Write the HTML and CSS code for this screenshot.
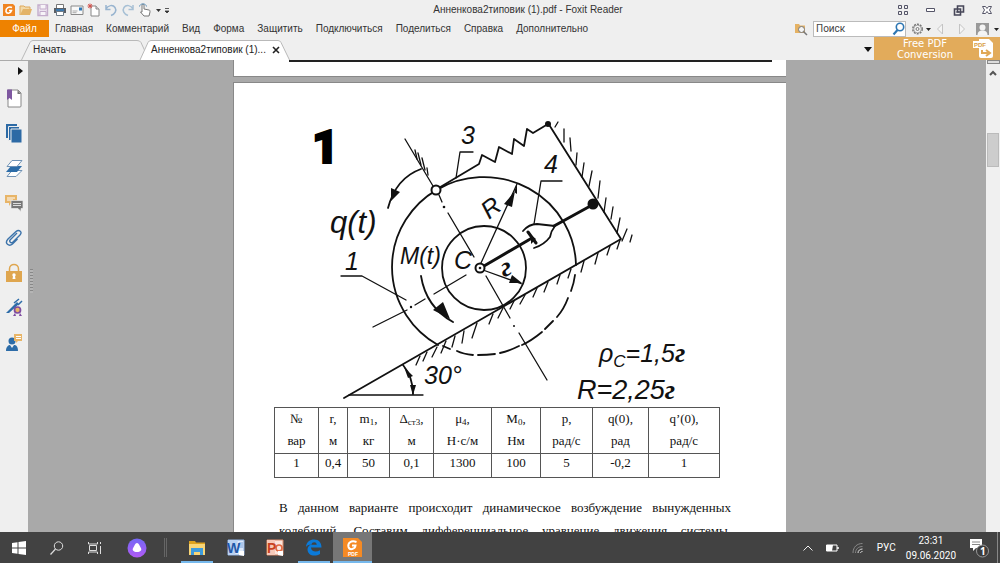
FILE: index.html
```html
<!DOCTYPE html>
<html lang="ru">
<head>
<meta charset="utf-8">
<title>Анненкова2типовик (1).pdf - Foxit Reader</title>
<link rel="stylesheet" href="styles.css">
</head>
<body>
<header class="chrome">
  <div class="titlebar">
    <div class="quick">
      <button aria-label="Foxit"><svg width="14" height="14" viewBox="0 0 14 14"><path d="M1 1h10l2 2v10H1z" fill="#f08421"/><path d="M10 4.500C7 3 3.500 5 4 8.500c.5 2.500 4.500 2.500 5.500-1H7" fill="none" stroke="#fff" stroke-width="1.600"/></svg></button>
      <button aria-label="Открыть"><svg width="14" height="14" viewBox="0 0 14 14"><path d="M1 12V3h4l1 1h5v2" fill="#f2d9a8" stroke="#dfa95a"/><path d="M1 12l3-6h9l-2 6z" fill="#e3b368"/></svg></button>
      <button aria-label="Сохранить"><svg width="14" height="14" viewBox="0 0 14 14"><path d="M2 2h9.500v10.500H2z" fill="#ece4ef" stroke="#c4adcc" stroke-width="1.400"/><path d="M4 2v4h6V2M4 12V8.500h6V12" fill="#f7f4f8" stroke="#c4adcc"/></svg></button>
      <button aria-label="Печать"><svg width="14" height="14" viewBox="0 0 14 14"><path d="M3.500 5V1.500h7V5" fill="#fff" stroke="#777"/><path d="M1 5h12v5H1z" fill="#5a5f66"/><path d="M3 6h8v2H3z" fill="#3d78ad"/><path d="M3.500 8.500h7v4h-7z" fill="#fff" stroke="#6e7b88"/></svg></button>
      <button aria-label="Почта"><svg width="14" height="14" viewBox="0 0 14 14"><path d="M1 3h12v8.500H1z" fill="#f8f8f8" stroke="#888"/><path d="M9 4.500h3v3H9z" fill="#2f77b5"/><path d="M2.500 8h5M2.500 9.700h4" stroke="#aaa"/></svg></button>
      <button aria-label="Создать"><svg width="14" height="14" viewBox="0 0 14 14"><path d="M4 3h5l3 3v7H4z" fill="#fff" stroke="#888"/><path d="M9 3v3h3" fill="#ddd" stroke="#888"/><path d="M3 .5v5M.5 3h5M1.200 1.200l3.600 3.600M4.800 1.200L1.200 4.800" stroke="#d4534d"/></svg></button>
      <button aria-label="Отменить"><svg width="14" height="14" viewBox="0 0 14 14"><path d="M2 2v4.500h4.500M2 6C4 2 9 1.500 11 4.500S11 11 7 12.500" fill="none" stroke="#98b4cf" stroke-width="1.500"/></svg></button>
      <button aria-label="Повторить"><svg width="14" height="14" viewBox="0 0 14 14"><path d="M12 2v4.500H7.500M12 6C10 2 5 1.500 3 4.500S3 11 7 12.500" fill="none" stroke="#a7c0d5" stroke-width="1.500"/></svg></button>
      <button aria-label="Рука"><svg width="14" height="14" viewBox="0 0 14 14"><path d="M4 9V2c0-1 2-1 2 0v4l5 1c1 0 1 1 1 2l-1 4H6L2.500 9z" fill="#fff" stroke="#777"/><path d="M1.500 3.500C2 0 8 0 8.500 3.500" fill="none" stroke="#5e8fb7"/></svg></button>
      <svg class="drop" width="6" height="14" viewBox="0 0 6 14"><path d="M1 6h5L3.500 9z" fill="#333"/></svg>
      <svg class="drop" width="6" height="14" viewBox="0 0 6 14"><path d="M1 5.500h4M1 8h4L3 10z" fill="#333" stroke="#333" stroke-width=".8"/></svg>
    </div>
    <div class="title">Анненкова2типовик (1).pdf - Foxit Reader</div>
    <div class="window-buttons">
      <button aria-label="Панель"><svg width="12" height="12" viewBox="0 0 12 12" fill="none" stroke="#555568"><path d="M1.500 1.500h3v3h-3zM7.500 1.500h3v3h-3zM1.500 7.500h3v3h-3zM7.500 7.500h3v3h-3z"/></svg></button>
      <button aria-label="Свернуть"><svg width="12" height="12" viewBox="0 0 12 12"><path d="M1.500 4.500h8v3h-8z" fill="#fff" stroke="#555568"/></svg></button>
      <button aria-label="Восстановить"><svg width="12" height="12" viewBox="0 0 12 12"><path d="M4.500 2h6v6h-6zM1.500 5h6v6h-6z" fill="#eee" stroke="#474759" stroke-width="1.600"/><path d="M3 8h3" stroke="#474759"/></svg></button>
      <button aria-label="Закрыть"><svg width="12" height="12" viewBox="0 0 12 12"><path d="M1.500 2.500h3L6 4.500l1.500-2h3L8.500 6l2 3.500h-3L6 7.500l-1.500 2h-3l2-3.500z" fill="#fff" stroke="#555568"/></svg></button>
    </div>
  </div>
  <div class="menubar">
    <nav class="menu">
      <button class="file">Файл</button>
      <button>Главная</button>
      <button>Комментарий</button>
      <button>Вид</button>
      <button>Форма</button>
      <button>Защитить</button>
      <button>Подключиться</button>
      <button>Поделиться</button>
      <button>Справка</button>
      <button>Дополнительно</button>
    </nav>
    <div class="tools">
      <button aria-label="Поиск в папке"><svg width="14" height="14" viewBox="0 0 14 14"><path d="M1 2h4l1 1.500h5V11H1z" fill="#e5b264"/><circle cx="7.500" cy="7.500" r="3" fill="#f4f4f4" stroke="#777"/><path d="M9.500 9.500L13 13" stroke="#777" stroke-width="1.500"/></svg></button>
      <div class="search"><input type="text" placeholder="Поиск" aria-label="Поиск"><svg width="13" height="14" viewBox="0 0 13 14"><circle cx="8" cy="5" r="3.700" fill="#fff" stroke="#2e77b3" stroke-width="1.600"/><path d="M5.500 8L1.500 12.500" stroke="#2e77b3" stroke-width="2.200"/></svg></div>
      <button aria-label="Настройки"><svg width="20" height="14" viewBox="0 0 20 14"><circle cx="6.500" cy="7" r="4.700" fill="none" stroke="#777" stroke-width="1.500" stroke-dasharray="2 1"/><circle cx="6.500" cy="7" r="3.800" fill="#f5f5f5" stroke="#888" stroke-width=".7"/><circle cx="6.500" cy="7" r="1.500" fill="none" stroke="#777"/><path d="M15 6h5l-2.500 3z" fill="#222"/></svg></button>
      <button aria-label="Назад"><svg width="8" height="14" viewBox="0 0 8 14"><path d="M6.500 2v10L1.500 7z" fill="#f5f5f5" stroke="#c4c4c4"/></svg></button>
      <button class="forward" aria-label="Вперёд"><svg width="8" height="14" viewBox="0 0 8 14"><path d="M1.500 2v10l5-5z" fill="#f5f5f5" stroke="#c4c4c4"/></svg></button>
      <button class="profile" aria-label="Профиль"><svg width="24" height="14" viewBox="0 0 24 14"><path d="M0 1h13v12H0z" fill="#999"/><circle cx="6.500" cy="5.500" r="3" fill="#f4f4f4"/><path d="M1.500 13c0-3 2-4 3.500-4.500h3c1.500.5 3.500 1.500 3.500 4.500z" fill="#f4f4f4"/><path d="M18 6h5l-2.500 3z" fill="#222"/></svg></button>
    </div>
  </div>
  <div class="tabbar">
    <div class="tabs">
      <svg class="tab-shapes" width="290" height="20" viewBox="0 0 290 20"><path d="M21.500 20L30 2.500Q31 .5 33 .5H137q3 0 4 2L149 20" fill="#f1f1f1" stroke="#b9b9b9"/><path d="M140 20L148 2.500Q149 .5 151 .5H278q2 0 3 2L289.500 20" fill="#fff" stroke="#b9b9b9"/></svg>
      <button class="tab first">Начать</button>
      <button class="tab second">Анненкова2типовик (1)...</button>
      <button class="tab close" aria-label="Закрыть вкладку"><svg width="8" height="8" viewBox="0 0 8 8"><path d="M1 1l6 6M7 1L1 7" stroke="#222" stroke-width="1.600"/></svg></button>
    </div>
    <svg class="tab-drop" width="8" height="5" viewBox="0 0 8 5"><path d="M0 0h8L4 5z" fill="#111"/></svg>
    <a class="banner" href="#"><span>Free PDF<br>Conversion</span>
      <svg width="22" height="21" viewBox="0 0 22 21"><path d="M6 1h10l4 4v13q0 2-2 2H8q-2 0-2-2z" fill="#fff"/><path d="M0 3h14v7H0z" fill="#fff"/><path d="M9 12v3h7M13 12l4 3-4 3" fill="none" stroke="#e0a856" stroke-width="2"/><text x="1" y="9" class="pdf-mark">PDF</text></svg></a>
  </div>
</header>

<main class="workspace">
  <aside class="sidebar">
    <button class="expand" aria-label="Развернуть"><svg width="5" height="8" viewBox="0 0 5 8"><path d="M0 0l5 4-5 4z" fill="#111"/></svg></button>
    <button aria-label="Закладки"><svg width="18" height="20" viewBox="0 0 18 20"><path d="M3 2h10l3 3v13q0 1-1 1H3z" fill="#fff" stroke="#888"/><path d="M12.500 2v4H16z" fill="#777"/><path d="M2 1.500h5V12l-2.500-2L2 12z" fill="#7e57a0"/></svg></button>
    <button aria-label="Страницы"><svg width="18" height="20" viewBox="0 0 18 20"><path d="M1 1h11v14H1z" fill="#2d6aa5"/><path d="M3.500 3.500h11v14h-11z" fill="#2d6aa5" stroke="#eee"/><path d="M6 6h11v14H6z" fill="#2d6aa5" stroke="#eee"/></svg></button>
    <button aria-label="Слои"><svg width="18" height="20" viewBox="0 0 18 20"><path d="M2 18.500l5-6h10l-6 6z" fill="#fff" stroke="#6f92b5"/><path d="M1 14l5-6h11l-5 6z" fill="#2c6ca8"/><path d="M2 8.500l5-6h10l-5 6z" fill="#fff" stroke="#6f92b5"/></svg></button>
    <button aria-label="Комментарии"><svg width="20" height="20" viewBox="0 0 20 20"><path d="M1 2h12v8H7l-2 3v-3H1z" fill="#e8b568"/><path d="M3 5h8M3 7h6" stroke="#fff"/><path d="M7 7.500h12v8h-2v3l-3-3H7z" fill="#777" stroke="#eee" stroke-width=".7"/><path d="M9 10.500h8M9 12.500h8" stroke="#ddd"/></svg></button>
    <button aria-label="Вложения"><svg width="18" height="20" viewBox="0 0 18 20"><path d="M12 5L5.500 11.500c-2 2 .5 4.500 2.500 2.500l7-7c3-3-1-6-4-3.500L3 11c-4 4.500 1 8 4.500 5l5-5" fill="none" stroke="#3c73aa" stroke-width="1.400"/></svg></button>
    <button aria-label="Безопасность"><svg width="18" height="20" viewBox="0 0 18 20"><path d="M4.500 9V6c0-6 9-6 9 0v3" fill="none" stroke="#dfa64f" stroke-width="1.500"/><path d="M1 8h16v11H1z" fill="#dfa64f"/><circle cx="9" cy="12" r="1.700" fill="#fff"/><path d="M8.200 12h1.600l.7 4h-3z" fill="#fff"/></svg></button>
    <button aria-label="Подписи"><svg width="18" height="20" viewBox="0 0 18 20"><path d="M1 15L12 4l2 2L4 15z" fill="#2d6ca8"/><path d="M9 5l5-4M13 7l4-4" stroke="#2d6ca8" stroke-width="1.500"/><circle cx="12.500" cy="12" r="3" fill="#e8b568" stroke="#7e4ba0" stroke-width="1.700"/><path d="M10 15l-2 3h3zM15 15l2 3h-3z" fill="#7e4ba0"/></svg></button>
    <button aria-label="Общий просмотр"><svg width="18" height="20" viewBox="0 0 18 20"><circle cx="7" cy="8" r="3.500" fill="#2d6ca8"/><path d="M1 18c0-5 3-6 4-6l2 3 2-3c2 0 4 1 4 6z" fill="#2d6ca8"/><path d="M9 1h8v7h-4l-2 2V8H9z" fill="#e8b568"/><path d="M11 3.500h5M11 5.500h5" stroke="#fff"/></svg></button>
  </aside>
  <div class="viewer">
    <div class="grip"></div>
    <div class="pages">
      <section class="page previous"><hr></section>
      <section class="page">
        <svg class="figure" viewBox="234 82 552 323" role="img" aria-label="Схема механической системы">
          <g class="line">
            <path d="M438 344A92 90 0 1 1 576 264"/>
            <path d="M575 274Q574 282 571 290M568 297Q564 308 557 316M553 320Q549 324 545 328M542 331Q531 340 522 344M519 345Q509 350 500 352M495 353Q487 354 478 354M473 354Q463 353 457 350M450 348L443 345"/>
            <circle cx="484" cy="267" r="42"/>
            <path d="M344 397L621 238L548 122"/>
            <path d="M437 188L479 163L482 154L495 161L499 146L512 153L514 138L524 145L527 128L533 132L548 123"/>
            <path d="M421 168Q396 177 388 207M421 275Q426 306 453 321M403 364Q413 376 413 393"/>
            <path d="M523 230Q529 223 537 223L555 225Q551 230 550 236Q544 244 534 247"/>
          </g>
          <g class="thin">
            <path d="M405 138L433 185M439 194L442 201M448 212L474 256M486 275L510 317M519 332L547 379M373 326L407 309M415 304L425 298M434 293L466 274"/>
            <path d="M349 394H423M341 275H362L406 299M456 177L460 151H473M534 223L541 180H562"/>
            <path d="M481 262L517 183M483 269L522 283"/>
            <path d="M415 149l2 9M418 152l3 12M422 157l3 12M427 167l1 7"/>
            <path d="M558 121l-3 5M564 128v13M570 137l1 13M577 152l-1 12M584 162l-2 14M592 170l-3 15M600 180l-2 17M606 197l-2 14M613 206l-2 12M620 217l-3 15M627 228l-5 12M632 234l-2 7"/>
            <path d="M420 355l-4 9M427 351l-4 9M437 346l-5 10M446 340l-5 12M455 335l-3 11M464 330l-2 12M477 322l-5 15M493 313l-4 10M503 307l-5 10M514 300l-4 8M525 294l-5 9M537 287l-4 9M548 281l-4 10M560 274l-3 9M571 268l-3 9M584 260l-3 11M598 252l-3 11M610 245l-3 9M620 239l-3 9"/>
          </g>
          <g class="thick"><path d="M484 265L532 237M528 231L536 242M554 225L594 203"/></g>
          <g class="ink">
            <circle cx="593" cy="203" r="5.500"/><circle cx="548" cy="123" r="3"/><circle cx="444" cy="206" r="1.300"/><circle cx="514" cy="325" r="1"/><circle cx="411" cy="306" r="1.200"/>
            <path d="M391 187l9 4-9 9zM433 309l10-8 7 17zM404 366l9 9-5 2zM410 384h6l-3 10zM504 203l8 3 3-16zM509 282l3-8 10 8zM514 191l3-8v10zM531 234l5 4-5 5z"/>
          </g>
          <g class="joint"><circle cx="436" cy="189" r="4.500"/><circle cx="480" cy="267" r="4.500"/></g>
          <circle class="ink" cx="480" cy="267" r="1.300"/>
          <text class="variant" x="312" y="162">1</text>
          <g class="hand">
            <text class="large" x="330" y="232">q(t)</text>
            <text class="moment" x="400" y="263">M(t)</text>
            <text x="454" y="268">C</text>
            <text transform="translate(489 219) rotate(-38)" x="0" y="0">R</text>
            <text class="radius" transform="translate(503 276) rotate(-15)" x="0" y="0">г</text>
            <text x="461" y="143">3</text>
            <text x="544" y="172">4</text>
            <text x="345" y="269">1</text>
            <text x="424" y="383">30°</text>
            <text x="599" y="361">ρ<tspan class="sub" dy="5">C</tspan><tspan dy="-5">=1,5</tspan><tspan class="radius">г</tspan></text>
            <text class="formula" x="577" y="398">R=2,25<tspan class="radius">г</tspan></text>
          </g>
        </svg>
        <table>
          <colgroup><col class="c1"><col class="c2"><col class="c3"><col class="c4"><col class="c5"><col class="c6"><col class="c7"><col class="c8"><col class="c9"></colgroup>
          <thead><tr><th>№<br>вар</th><th>r,<br>м</th><th>m<sub>1</sub>,<br>кг</th><th>Δ<sub>ст3</sub>,<br>м</th><th>μ<sub>4</sub>,<br>Н·с/м</th><th>M<sub>0</sub>,<br>Нм</th><th>p,<br>рад/с</th><th>q(0),<br>рад</th><th>q’(0),<br>рад/с</th></tr></thead>
          <tbody><tr><td>1</td><td>0,4</td><td>50</td><td>0,1</td><td>1300</td><td>100</td><td>5</td><td>-0,2</td><td>1</td></tr></tbody>
        </table>
        <p>В данном варианте происходит динамическое возбуждение вынужденных колебаний. Составим дифференциальное уравнение движения системы,</p>
      </section>
    </div>
    <div class="scrollbar">
      <span class="split"></span>
      <button aria-label="Вверх"><svg width="8" height="6" viewBox="0 0 8 6"><path d="M1 5l3-3 3 3" fill="none" stroke="#555" stroke-width="2"/></svg></button>
      <span class="thumb"></span>
    </div>
  </div>
</main>

<footer class="taskbar">
  <div class="apps">
    <button aria-label="Пуск"><svg width="14" height="14" viewBox="0 0 14 14"><path d="M0 2l5.500-.8v5.300H0zM6.500 1L14 0v6.500H6.500zM0 7.500h5.500v5.300L0 12zM6.500 7.500H14V14l-7.500-1z" fill="#fff"/></svg></button>
    <button aria-label="Поиск"><svg width="14" height="14" viewBox="0 0 14 14"><circle cx="8.500" cy="5" r="4.200" fill="none" stroke="#ddd"/><path d="M5.500 8L.5 13.500" stroke="#ddd" stroke-width="1.200"/></svg></button>
    <button aria-label="Представление задач"><svg width="14" height="14" viewBox="0 0 14 14" fill="none" stroke="#ddd"><path d="M.5 1v2h9V1M.5 13v-2h9v2M1.500 4.500h7v5h-7zM12.500 1v2M12.500 5v8"/></svg></button>
    <button class="alice" aria-label="Алиса"><svg width="20" height="20" viewBox="0 0 20 20"><defs><linearGradient id="violet" x1="0" y1="0" x2="0" y2="1"><stop offset="0" stop-color="#7468f5"/><stop offset="1" stop-color="#b15af5"/></linearGradient></defs><circle cx="10" cy="10" r="9.500" fill="url(#violet)"/><path d="M10 5c1 0 1.500.8 2 1.600l2 3.700c1 2-.5 3.700-4 3.700s-5-1.700-4-3.700l2-3.700C8.500 5.800 9 5 10 5z" fill="#fff"/></svg></button>
    <span class="divider"></span>
    <button class="running" aria-label="Проводник"><svg width="18" height="16" viewBox="0 0 18 16"><path d="M1 1h6l1 1.500h9V5H1z" fill="#dda21e"/><path d="M1 4h16v11H1z" fill="#f8d576"/><path d="M3 15V8h12v7h-3v-3H6v3z" fill="#3d9bdc"/></svg></button>
    <button aria-label="Word"><svg width="18" height="18" viewBox="0 0 18 18"><path d="M1 1h16v15H1z" fill="#dde9fa" stroke="#8daede"/><path d="M12 4h4M12 6h4M12 8h4" stroke="#78a0db"/><path d="M1 1h10L8 16H1z" fill="#b9d1f2"/><text x="0" y="14" class="office word">W</text><path d="M12 12h5v5l-5-1z" fill="#fff"/></svg></button>
    <button aria-label="PowerPoint"><svg width="18" height="18" viewBox="0 0 18 18"><path d="M1 1h16v15H1z" fill="#fbe5dc" stroke="#db8969"/><circle cx="13" cy="9" r="3" fill="none" stroke="#e2683f" stroke-width="1.600"/><path d="M1 1h8v15H1z" fill="#f6c9b8"/><text x="1" y="14" class="office point">P</text><path d="M12 12h5v5l-5-1z" fill="#fff"/></svg></button>
    <button class="running" aria-label="Edge"><svg width="17" height="17" viewBox="0 0 17 17"><path d="M1 8C1.500 2.500 5 .5 9 .5c5 0 7.500 3.500 7.500 8H6c0 4 5 5 9 2.700v3.800C9 18.500 2.500 16 2.500 10.500 2.500 8 4 6.500 6 5.500 3.500 5.700 2 6.500 1 8zm5.300-2.200h5.500C11.500 2.500 7 2.500 6.300 5.800z" fill="#0b7ad8"/></svg></button>
    <button class="running active" aria-label="Foxit Reader"><svg width="19" height="19" viewBox="0 0 19 19"><path d="M0 0h15l4 4v15H0z" fill="#f58a24"/><path d="M13.500 4C8 2 4.500 5 5.500 9c1 3.500 6.500 2.500 7-1.500H9" fill="none" stroke="#fff" stroke-width="2"/><text x="5" y="17.500" class="pdf-small">PDF</text></svg></button>
  </div>
  <div class="tray">
    <button aria-label="Скрытые значки"><svg width="10" height="6" viewBox="0 0 10 6"><path d="M.5 5.500L5 1l4.500 4.500" fill="none" stroke="#eee"/></svg></button>
    <button aria-label="Батарея"><svg width="13" height="8" viewBox="0 0 13 8"><path d="M.5 1h10.500v6H.5z" fill="none" stroke="#fff"/><path d="M1 1h6l-1 6H1z" fill="#fff"/><path d="M12 3v2" stroke="#fff" stroke-width="1.500"/></svg></button>
    <button aria-label="Сеть"><svg width="12" height="12" viewBox="0 0 12 12" fill="none"><path d="M1 11C1 5 5 1.500 10.500 1.500M3.500 11c0-4 3-6.500 7-6.500" stroke="#888"/><path d="M6 11c0-2.500 2-4 4.500-4M8.500 11c0-1 1-1.500 2-1.500" stroke="#ddd"/></svg></button>
    <button class="lang">РУС</button>
    <button class="clock">23:31<br>09.06.2020</button>
    <button class="notice" aria-label="Уведомления"><svg width="20" height="20" viewBox="0 0 20 20"><path d="M1 1h12v9H7l-3 3v-3H1z" fill="#fff"/><path d="M3 4h8M3 6.500h8" stroke="#888"/><circle cx="13.500" cy="13" r="6" fill="#3c3c3c" stroke="#999"/><text x="11" y="17" class="count">1</text></svg></button>
  </div>
</footer>
</body>
</html>
```
FILE: styles.css
```css
* { box-sizing: border-box; }
body {
  margin: 0;
  height: 100vh;
  display: flex;
  flex-direction: column;
  overflow: hidden;
  background: #efefef;
  color: #333;
  font: 10px/16px Roboto, "Noto Sans", sans-serif;
}
button {
  border: 0;
  padding: 0;
  background: none;
  color: inherit;
  font: inherit;
  white-space: nowrap;
}
svg { display: block; flex: none; }

.chrome { flex: none; }
.titlebar {
  height: 20px;
  display: grid;
  grid-template-columns: 1fr auto 1fr;
  align-items: center;
}
.quick { display: flex; gap: 3px; padding-left: 2px; }
.title { text-align: center; padding-left: 56px; font-family: "Liberation Sans", sans-serif; }
.window-buttons { display: flex; justify-content: flex-end; gap: 16px; padding-right: 7px; }

.menubar { height: 17px; display: flex; justify-content: space-between; }
.menu { display: flex; gap: 13px; font-family: "Liberation Sans", sans-serif; line-height: 17px; }
.menu .file {
  width: 49px;
  margin-right: -7px;
  background: #ee8200;
  color: #fff;
}
.tools { display: flex; align-items: center; gap: 5px; }
.tools .forward { margin-left: 9px; }
.tools .profile { margin-left: 5px; }
.search { position: relative; width: 93px; }
.search input {
  display: block;
  width: 100%;
  height: 16px;
  border: 1px solid #bbb;
  padding: 0 2px;
  background: #fff;
  font: inherit;
}
.search input::placeholder { color: #444; opacity: 1; }
.search svg { position: absolute; right: 1px; top: 1px; }

.tabbar { height: 23px; display: flex; justify-content: flex-end; align-items: center; }
.tabs {
  position: relative;
  display: flex;
  align-self: flex-end;
  width: 290px;
  height: 20px;
  margin-right: auto;
  color: #222;
  font-family: "Liberation Sans", sans-serif;
}
.tab-shapes { position: absolute; left: 0; top: 0; }
.tab { position: relative; text-align: left; }
.first { width: 118px; margin-left: 33px; }
.second { width: 121px; }
.tab-drop { margin-right: 2px; margin-top: 2px; }
.banner {
  display: flex;
  align-items: center;
  justify-content: flex-end;
  gap: 20px;
  width: 126px;
  height: 23px;
  padding-right: 5px;
  background: #e2ab5b;
  color: #fff;
  text-decoration: none;
  text-align: center;
  font: 10px/11px "DejaVu Sans", sans-serif;
}
.pdf-mark { font: bold 6px "Liberation Sans", sans-serif; fill: #d99e46; }

.workspace { flex: 1; min-height: 0; display: flex; }
.sidebar {
  width: 28px;
  display: flex;
  flex-direction: column;
  align-items: center;
  gap: 15px;
  border-top: 1px solid #aaa;
}
.sidebar .expand { align-self: flex-end; margin: 6px 5px -2px 0; }
.viewer {
  flex: 1;
  min-width: 0;
  display: flex;
  align-items: center;
  background: #a9a9a9;
}
.grip {
  width: 3px;
  height: 24px;
  margin-left: 2px;
  margin-bottom: 30px;
  background: repeating-linear-gradient(#888 0 1px, #b5b5b5 1px 3px);
}
.pages {
  flex: 1;
  align-self: stretch;
  display: flex;
  flex-direction: column;
  align-items: center;
  gap: 5px;
  overflow: hidden;
}
.page {
  width: 553px;
  flex: none;
  background: #fff;
  border: 1px solid #888;
  border-width: 1px 0 0 1px;
  color: #111;
  font: 13px/23px "Liberation Serif", serif;
}
.previous { height: 17px; border-width: 0 0 1px 1px; }
.previous hr { margin: 0 14px 0 55px; border: 0; border-top: 2px solid #222; }

.figure { width: 100%; }
.line, .thin, .thick, .joint { fill: none; stroke: #111; stroke-width: 1.8; stroke-linecap: round; stroke-linejoin: round; }
.thin { stroke-width: 1.3; }
.thick { stroke-width: 3; }
.joint { fill: #fff; stroke-width: 2; }
.ink { fill: #111; }
.variant { font: 900 46px Roboto, sans-serif; fill: #000; stroke: #000; stroke-width: 2; }
.hand { font: italic 25px "Liberation Sans", sans-serif; fill: #111; }
.large { font-size: 31px; }
.moment { font-size: 23px; }
.formula { font-size: 27px; }
.sub { font-size: 17px; }
.radius { font-family: "Liberation Serif", serif; font-weight: bold; font-size: 28px; }

table {
  width: 445px;
  margin: 1px 0 0 40px;
  border-collapse: collapse;
  table-layout: fixed;
  text-align: center;
}
th, td { padding: 0; border: 1px solid #555; font-weight: normal; vertical-align: top; }
th { line-height: 22px; padding-bottom: 1px; }
td { line-height: 18px; height: 24px; }
sub { font-size: 9px; line-height: 0; vertical-align: -2px; }
.c1 { width: 44px; } .c2 { width: 29px; } .c3 { width: 42px; }
.c4 { width: 44px; } .c5 { width: 58px; } .c6 { width: 49px; }
.c7 { width: 52px; } .c8 { width: 56px; } .c9 { width: 71px; }
.page p { margin: 18px 55px 0 45px; text-align: justify; text-align-last: justify; }

.scrollbar {
  width: 14px;
  align-self: stretch;
  display: flex;
  flex-direction: column;
  align-items: center;
  background: #f0f0f0;
}
.split { width: 13px; height: 4px; border: 1px solid #888; background: #ddd; }
.scrollbar button { margin-top: 6px; }
.thumb { width: 12px; height: 34px; margin-top: 57px; background: #cdcdcd; border: 1px solid #bbb; }

.taskbar {
  flex: none;
  height: 31px;
  display: flex;
  justify-content: space-between;
  background: #424242;
  color: #fff;
}
.apps, .tray { display: flex; }
.apps button { width: 39px; display: flex; justify-content: center; align-items: center; }
.apps button:first-child { width: 37px; }
.apps button:nth-child(3) { width: 37px; }
.apps .alice { width: 48px; }
.divider { width: 3px; height: 19px; margin: 6px 10px 0 3px; border: 1px solid #666; border-width: 0 1px; }
.running { background: linear-gradient(#76b9ed, #76b9ed) bottom / 32px 2px no-repeat; }
.apps .active { background: linear-gradient(#76b9ed, #76b9ed) bottom / 100% 2px no-repeat #777; }
.office { font: bold 14px "Liberation Sans", sans-serif; }
.word { fill: #1f57a8; }
.point { fill: #c9421f; }
.pdf-small { font: bold 5px "Liberation Sans", sans-serif; fill: #fff; }
.tray { align-items: center; gap: 13px; padding-right: 2px; }
.tray button { line-height: 15px; }
.tray .lang { margin-right: -3px; }
.tray .notice { width: 29px; border-right: 1px solid #888; height: 31px; }
.count { font: bold 10px "Noto Sans", sans-serif; fill: #fff; }
```
